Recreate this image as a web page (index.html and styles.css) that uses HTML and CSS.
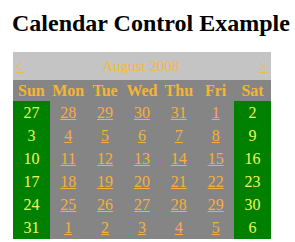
FILE: index.html
```html
<!DOCTYPE html>
<html>
<head>
<meta charset="utf-8">
<link rel="stylesheet" href="styles.css">
</head>
<body>
<h1 class="title">Calendar Control Example</h1>
<table class="cal">
  <tr class="cal-title">
    <td colspan="7">
      <div class="title-bar">
        <a class="nav" href="#">&lt;</a>
        <span class="month">August 2008</span>
        <a class="nav" href="#">&gt;</a>
      </div>
    </td>
  </tr>
  <tr class="cal-head">
    <th>Sun</th><th>Mon</th><th>Tue</th><th>Wed</th><th>Thu</th><th>Fri</th><th>Sat</th>
  </tr>
  <tr class="week">
    <td class="we">27</td><td><a href="#">28</a></td><td><a href="#">29</a></td><td><a href="#">30</a></td><td><a href="#">31</a></td><td><a href="#">1</a></td><td class="we">2</td>
  </tr>
  <tr class="week">
    <td class="we">3</td><td><a href="#">4</a></td><td><a href="#">5</a></td><td><a href="#">6</a></td><td><a href="#">7</a></td><td><a href="#">8</a></td><td class="we">9</td>
  </tr>
  <tr class="week">
    <td class="we">10</td><td><a href="#">11</a></td><td><a href="#">12</a></td><td><a href="#">13</a></td><td><a href="#">14</a></td><td><a href="#">15</a></td><td class="we">16</td>
  </tr>
  <tr class="week">
    <td class="we">17</td><td><a href="#">18</a></td><td><a href="#">19</a></td><td><a href="#">20</a></td><td><a href="#">21</a></td><td><a href="#">22</a></td><td class="we">23</td>
  </tr>
  <tr class="week">
    <td class="we">24</td><td><a href="#">25</a></td><td><a href="#">26</a></td><td><a href="#">27</a></td><td><a href="#">28</a></td><td><a href="#">29</a></td><td class="we">30</td>
  </tr>
  <tr class="week">
    <td class="we">31</td><td><a href="#">1</a></td><td><a href="#">2</a></td><td><a href="#">3</a></td><td><a href="#">4</a></td><td><a href="#">5</a></td><td class="we">6</td>
  </tr>
</table>
</body>
</html>
```
FILE: styles.css
```css
body {
  margin: 0;
  padding: 0 0 0 12px;
  background: #ffffff;
  font-family: "Liberation Serif", "Times New Roman", serif;
}
.title {
  margin: 9px 0 15px 0;
  font-size: 24px;
  font-weight: bold;
  line-height: 28px;
  color: #000000;
}
.cal {
  border-collapse: collapse;
  width: 258px;
  margin-left: 1px;
  font-size: 16px;
  table-layout: fixed;
}
.cal td, .cal th {
  padding: 0;
  text-align: center;
}
.cal .cal-title td {
  background: #c4c4c4;
  height: 28px;
}
.title-bar {
  display: flex;
  justify-content: space-between;
  align-items: center;
  padding: 0 4px 0 2px;
  color: #f7b840;
  font-size: 15px;
}
.title-bar .nav {
  color: #f7b840;
}
.cal-head th {
  background: #858585;
  color: #f5b534;
  font-weight: bold;
  height: 21px;
}
.cal .week td {
  height: 23px;
  background: #858585;
}
.cal a {
  color: #f7b03a;
}
.cal .week td.we {
  background: #008000;
  color: #f2f55a;
}
```
